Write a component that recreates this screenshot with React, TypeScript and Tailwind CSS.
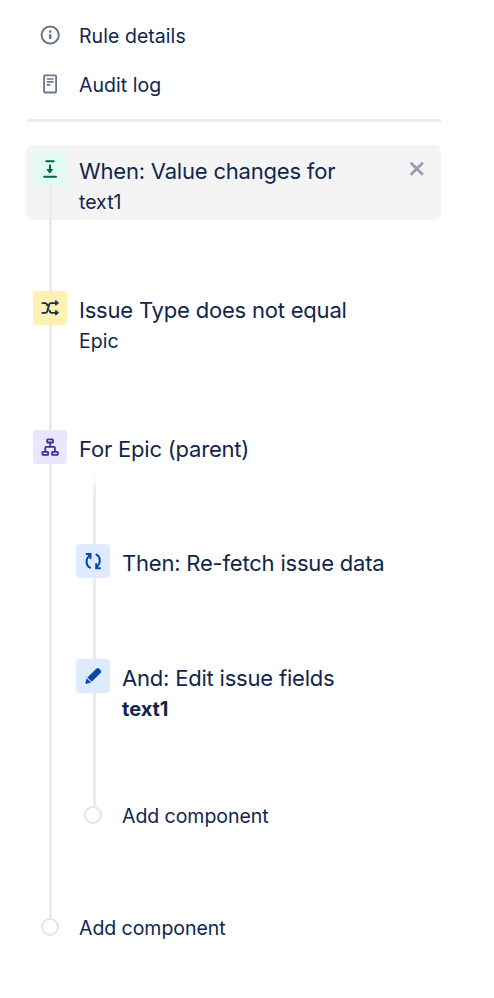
import type { ReactNode } from "react";

const InfoIcon = () => (
  <svg className="mb-[5px]" width="24" height="24" viewBox="0 0 24 24" fill="none">
    <circle cx="12.2" cy="12" r="8.6" stroke="#6b778c" strokeWidth="2" />
    <circle cx="12.2" cy="8.6" r="1.3" fill="#6b778c" />
    <path d="M12.2 12.2v2.8" stroke="#6b778c" strokeWidth="2.5" strokeLinecap="round" />
  </svg>
);

const LogIcon = () => (
  <svg className="mb-[5px]" width="24" height="24" viewBox="0 0 24 24" fill="none" stroke="#6b778c">
    <rect x="6.1" y="3.3" width="12" height="17.2" rx="0.8" strokeWidth="1.8" />
    <path d="M8.8 7h6.8M8.8 9.9h6.8M8.8 12.9h3.4" strokeWidth="1.6" />
  </svg>
);

const TriggerIcon = () => (
  <svg width="34" height="34" viewBox="0 0 34 34" fill="none" stroke="#006644" strokeWidth="2" strokeLinecap="round">
    <path d="M13.3 9.3h7.4M11.2 24.7h11.8M17 13.2v5" />
    <path d="M14.4 17.6h5.2L17 20.8z" fill="#006644" strokeWidth="1" strokeLinejoin="round" />
  </svg>
);

const ConditionIcon = () => (
  <svg width="34" height="34" viewBox="0 0 34 34" fill="none" stroke="#172b4d" strokeWidth="1.9" strokeLinecap="round">
    <path d="M9.4 21.9h3c1 0 1.5-.4 1.8-1.4l2-7c.3-1 .8-1.4 1.8-1.4h5.5" />
    <path d="M9.4 12.1h2.8c.9 0 1.4.4 1.7 1.3l.3.9M16.6 19.6l.3.9c.3.9.8 1.4 1.7 1.4h4.9" />
    <path d="M22.7 9.9v4.4l2.6-2.2zM22.7 19.7v4.4l2.6-2.2z" fill="#172b4d" strokeWidth="1" strokeLinejoin="round" />
  </svg>
);

const BranchIcon = () => (
  <svg width="34" height="34" viewBox="0 0 34 34" fill="none" stroke="#403294" strokeWidth="1.8" strokeLinejoin="round">
    <rect x="14.2" y="9.4" width="5.8" height="3.1" rx="0.6" />
    <rect x="9.4" y="21.8" width="5.8" height="3.1" rx="0.6" />
    <rect x="19" y="21.8" width="5.8" height="3.1" rx="0.6" />
    <path d="M17.1 12.5v4.3M12.3 21.8v-4.1c0-.6.3-.9.9-.9H21c.6 0 .9.3.9.9v4.1" />
  </svg>
);

const RefreshIcon = () => (
  <svg width="34" height="34" viewBox="0 0 34 34" fill="none" stroke="#0747a6" strokeWidth="2" strokeLinecap="round">
    <path d="M10.6 10.1h3.9v4.1M14 23.7c-4.2-2-4.8-8.6-.3-12.4" />
    <path d="M24 24.2h-3.8v-4.1M20.4 10.6c4.2 2 4.8 8.6.3 12.4" />
  </svg>
);

const EditIcon = () => (
  <svg width="34" height="34" viewBox="0 0 34 34" fill="#0747a6">
    <path d="M20.3 9.7a2 2 0 0 1 2.8 0l1.5 1.5a2 2 0 0 1 0 2.8l-8.9 8.8-4.3-4.3z" />
    <path d="M10.7 19.2l4.3 4.3-4.5 1.3c-.7.2-1.2-.3-1.1-1z" />
  </svg>
);

const CloseIcon = () => (
  <svg width="24" height="24" viewBox="0 0 24 24" stroke="#97a0af" strokeWidth="2.8" strokeLinecap="round">
    <path d="M6.5 6.5l10.6 10.6M17.1 6.5L6.5 17.1" />
  </svg>
);

const Tile = ({ color, children }: { color: string; children: ReactNode }) => (
  <div className={`size-[34px] shrink-0 rounded-[4px] ${color}`}>{children}</div>
);

const Circle = () => <div className="size-[18px] shrink-0 rounded-full border-2 border-[#e3e4e9] bg-white" />;

const Title = ({ children }: { children: ReactNode }) => (
  <h2 className="text-[22px] leading-8 tracking-[-0.2px] whitespace-nowrap">{children}</h2>
);

const lineStyle = "w-[3px] bg-[#ebecf0]";

type StepProps = {
  icon: ReactNode;
  color: string;
  title: string;
  detail: string;
  selected?: boolean;
};

const Step = ({ icon, color, title, detail, selected }: StepProps) => (
  <div className={`flex h-[75px] rounded-[6px] pl-[7px] ${selected ? "bg-[#f4f4f4]" : ""}`}>
    <div className="flex w-[34px] flex-col">
      <div className={`ml-4 h-[7px] ${selected ? "" : lineStyle}`} />
      <Tile color={color}>{icon}</Tile>
      <div className={`ml-4 flex-1 ${lineStyle}`} />
    </div>
    <div className="flex-1 pt-[10px] pl-3">
      <Title>{title}</Title>
      <p className="text-[19.5px] leading-[30px]">{detail}</p>
    </div>
    {selected && (
      <button className="mt-3 mr-3 h-6">
        <CloseIcon />
      </button>
    )}
  </div>
);

const App = () => {
  return (
    <div className="min-h-[998px] w-[494px] bg-white pt-[25px] pl-[26px] font-['Inter','Liberation_Sans',sans-serif] text-[#10264d]">
      <div className="w-[415px]">
        <nav className="flex flex-col gap-[25px] border-b-3 border-[#ebecf0] pb-[21px] pl-3">
          <a className="flex h-6 items-center gap-[17px] text-[19.5px] tracking-[0.05px]">
            <InfoIcon />
            Rule details
          </a>
          <a className="flex h-6 items-center gap-[17px] text-[19.5px] tracking-[0.05px]">
            <LogIcon />
            Audit log
          </a>
        </nav>

        <main className="pt-[23px]">
          <Step icon={<TriggerIcon />} color="bg-[#e3fcef]" title="When: Value changes for" detail="text1" selected />
          <div className={`ml-[23px] h-16 ${lineStyle}`} />
          <Step icon={<ConditionIcon />} color="bg-[#fff0b3]" title="Issue Type does not equal" detail="Epic" />
          <div className={`ml-[23px] h-16 ${lineStyle}`} />

          <section className="flex h-[495px] pl-[7px]">
            <div className="flex w-[34px] flex-col">
              <div className={`ml-4 h-[7px] ${lineStyle}`} />
              <Tile color="bg-[#eae6ff]">
                <BranchIcon />
              </Tile>
              <div className={`ml-4 flex-1 ${lineStyle}`} />
            </div>
            <div className="flex-1 pt-[10px]">
              <div className="pl-3">
                <Title>For Epic (parent)</Title>
              </div>
              <div className="mt-2 flex flex-col pl-[9px]">
                <div className="ml-[17px] h-[71px] w-[3px] bg-linear-to-b from-white to-[#ebecf0] to-30%" />
                <div className="flex h-[34px] items-start gap-3">
                  <Tile color="bg-[#deebff]">
                    <RefreshIcon />
                  </Tile>
                  <div className="pt-[3px]">
                    <Title>Then: Re-fetch issue data</Title>
                  </div>
                </div>
                <div className={`ml-[17px] h-[81px] ${lineStyle}`} />
                <div className="flex h-[147px] gap-3">
                  <div className="flex flex-col">
                    <Tile color="bg-[#deebff]">
                      <EditIcon />
                    </Tile>
                    <div className={`ml-[17px] flex-1 ${lineStyle}`} />
                  </div>
                  <div className="pt-[3px]">
                    <Title>And: Edit issue fields</Title>
                    <p className="text-[20px] leading-[30px] font-bold">text1</p>
                  </div>
                </div>
                <div className="flex h-[18px] items-center gap-5 pl-2 text-[19.5px] tracking-[-0.05px]">
                  <Circle />
                  <span className="pt-1">Add component</span>
                </div>
              </div>
            </div>
          </section>
          <div className="flex h-[18px] items-center gap-5 pl-[15px] text-[19.5px] tracking-[-0.05px]">
            <Circle />
            <span className="pt-1">Add component</span>
          </div>
        </main>
      </div>
    </div>
  );
};

export default App;
